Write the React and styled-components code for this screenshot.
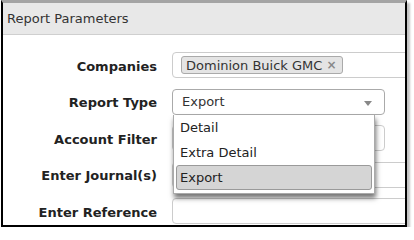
import React from 'react';
import styled, { createGlobalStyle } from 'styled-components';

const GlobalStyle = createGlobalStyle`
  html, body {
    margin: 0;
    padding: 0;
    background: #fff;
  }
  body {
    font-family: 'DejaVu Sans', Verdana, sans-serif;
    font-size: 13px;
    color: #333;
  }
`;

const Frame = styled.div`
  box-sizing: border-box;
  margin-left: 1px;
  width: 406px;
  height: 227px;
  border: 2px solid #000;
  border-top: 3px solid #a4a4a4;
  box-shadow: 3px 3px 2px #c4c4c4;
  overflow: hidden;
  background: #fff;
`;

const Header = styled.div`
  height: 31px;
  display: flex;
  align-items: center;
  padding-left: 4px;
  background: #e8e8e8;
  border-bottom: 1px solid #cfcfcf;
  color: #333;
`;

const Form = styled.div`
  display: grid;
  grid-template-columns: 154px 1fr;
  grid-auto-rows: 26px;
  column-gap: 15px;
  row-gap: 10.5px;
  padding-top: 17px;
  align-items: center;
`;

const Label = styled.div`
  text-align: right;
  font-weight: bold;
  color: #222;
  padding-top: 2px;
  white-space: nowrap;
`;

const Field = styled.div`
  position: relative;
  box-sizing: border-box;
  height: 26px;
  width: ${(p) => (p.$wide ? '260px' : '213px')};
  border: 1px solid ${(p) => (p.$dark ? '#aaa' : '#ccc')};
  border-radius: 4px;
  background: #fff;
  display: flex;
  align-items: center;
  padding-left: ${(p) => (p.$tags ? '8px' : '9px')};
  color: #333;
`;

const Tag = styled.span`
  box-sizing: border-box;
  height: 18px;
  display: inline-flex;
  align-items: center;
  gap: 4px;
  padding: 0 6px 0 4px;
  background: #e4e4e4;
  border: 1px solid #aaa;
  border-radius: 3px;
  color: #333;
`;

const Remove = styled.span`
  color: #888;
  font-weight: bold;
  font-size: 12px;
  line-height: 1;
`;

const Arrow = styled.span`
  position: absolute;
  right: 12px;
  top: 11px;
  width: 0;
  height: 0;
  border-left: 4px solid transparent;
  border-right: 4px solid transparent;
  border-top: 5px solid #888;
`;

const Menu = styled.ul`
  position: absolute;
  top: 25px;
  left: 0;
  width: 202px;
  box-sizing: border-box;
  margin: 0;
  padding: 0 2px 3px 2px;
  list-style: none;
  background: #fff;
  border: 1px solid #aaa;
  border-top: none;
  box-shadow: 1px 4px 5px rgba(0, 0, 0, 0.55);
  z-index: 2;
`;

const Option = styled.li`
  box-sizing: border-box;
  height: 25px;
  display: flex;
  align-items: center;
  padding-left: 3px;
  border: 1px solid ${(p) => (p.$active ? '#9a9a9a' : 'transparent')};
  border-radius: 3px;
  background: ${(p) => (p.$active ? '#d5d5d5' : 'transparent')};
  color: #222;
`;

const options = ['Detail', 'Extra Detail', 'Export'];

export default function App() {
  return (
    <>
      <GlobalStyle />
      <Frame>
        <Header>Report Parameters</Header>
        <Form>
          <Label>Companies</Label>
          <Field $wide $tags>
            <Tag>
              Dominion Buick GMC
              <Remove>×</Remove>
            </Tag>
          </Field>

          <Label>Report Type</Label>
          <Field $dark>
            Export
            <Arrow />
            <Menu>
              {options.map((o) => (
                <Option key={o} $active={o === 'Export'}>
                  {o}
                </Option>
              ))}
            </Menu>
          </Field>

          <Label>Account Filter</Label>
          <Field />

          <Label>Enter Journal(s)</Label>
          <Field $wide />

          <Label>Enter Reference</Label>
          <Field $wide />
        </Form>
      </Frame>
    </>
  );
}
